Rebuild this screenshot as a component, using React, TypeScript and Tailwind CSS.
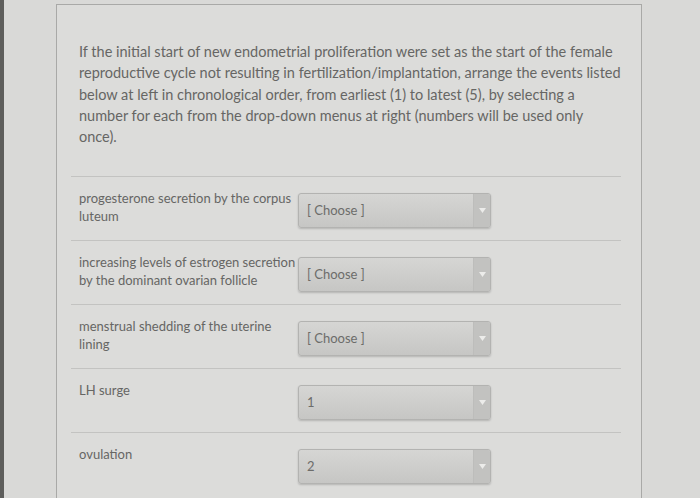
const rows = [
  { lines: ["progesterone secretion by the corpus", "luteum"], value: "[ Choose ]" },
  { lines: ["increasing levels of estrogen secretion", "by the dominant ovarian follicle"], value: "[ Choose ]" },
  { lines: ["menstrual shedding of the uterine", "lining"], value: "[ Choose ]" },
  { lines: ["LH surge"], value: "1" },
  { lines: ["ovulation"], value: "2" },
];

const paragraph = [
  "If the initial start of new endometrial proliferation were set as the start of the female",
  "reproductive cycle not resulting in fertilization/implantation, arrange the events listed",
  "below at left in chronological order, from earliest (1) to latest (5), by selecting a",
  "number for each from the drop-down menus at right (numbers will be used only",
  "once).",
];

export default function App() {
  return (
    <div className="w-[700px] h-[498px] overflow-hidden bg-[#d9d9d7] flex font-['Lato',sans-serif] text-[#666664]">
      <div className="w-[4px] bg-[#5e5e5c]" />
      <div className="ml-[52px] mt-[4px] w-[586px] border-l border-r border-t border-[#a9a9a7] bg-[#dcdcda] pl-[14px] pr-[20px]">
        <p className="pl-[8px] pt-[36px] pb-[29px] text-[14.5px] leading-[21.25px] whitespace-nowrap">
          {paragraph.map((l) => (
            <span key={l} className="block">{l}</span>
          ))}
        </p>
        {rows.map((r) => (
          <Row key={r.lines[0]} lines={r.lines} value={r.value} />
        ))}
      </div>
    </div>
  );
}

function Row({ lines, value }: { lines: string[]; value: string }) {
  return (
    <div className="flex items-start border-t border-[#c3c3c1] pt-[12px] pb-[12px]">
      <div className="w-[227px] shrink-0 pl-[8px] text-[13px] leading-[18px] whitespace-nowrap">
        {lines.map((l) => (
          <span key={l} className="block">{l}</span>
        ))}
      </div>
      <Select value={value} />
    </div>
  );
}

function Select({ value }: { value: string }) {
  return (
    <div className="mt-[4px] flex h-[35px] w-[193px] overflow-hidden rounded-[3px] border border-[#b3b3b1] bg-gradient-to-b from-[#d6d6d4] to-[#c6c6c4] shadow-[0_1px_2px_rgba(0,0,0,0.18)]">
      <div className="flex flex-1 items-center pl-[8px] text-[13px] text-[#6c6c6a]">{value}</div>
      <div className="flex w-[17px] items-center justify-center border-l border-[#bdbdbb] bg-[#c2c2c0]">
        <svg width="7" height="5" viewBox="0 0 7 5">
          <path d="M0 0 L7 0 L3.5 5 Z" fill="#ececea" />
        </svg>
      </div>
    </div>
  );
}
